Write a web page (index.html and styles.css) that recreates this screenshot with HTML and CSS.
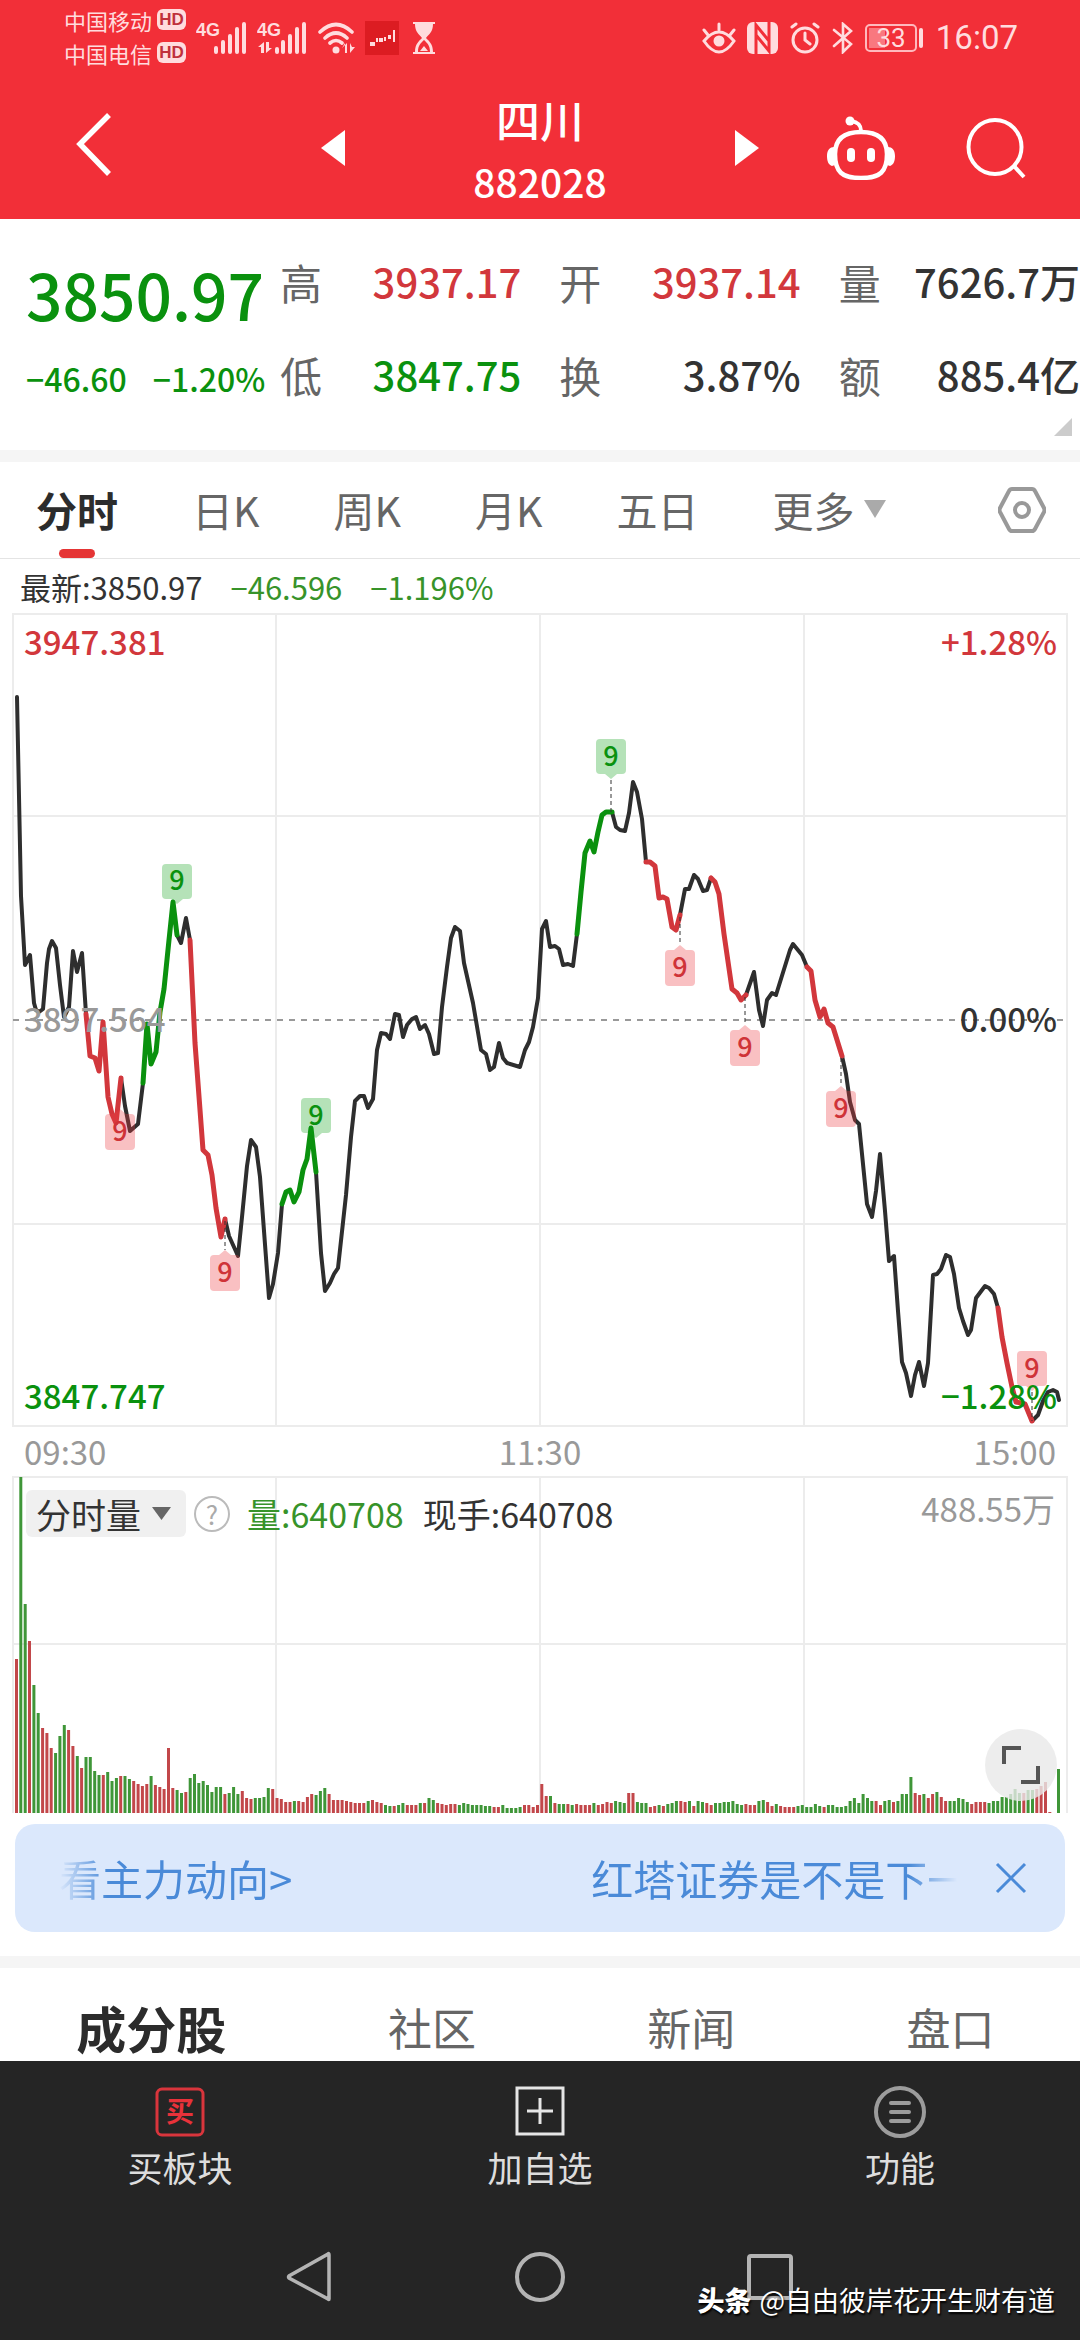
FILE: index.html
```html
<!DOCTYPE html>
<html lang="zh-CN">
<head>
<meta charset="utf-8">
<meta name="viewport" content="width=device-width, initial-scale=1">
<title>四川 882028</title>
<link rel="stylesheet" href="styles.css">
</head>
<body>
<div class="app">
  <header class="top">
    <div class="status">
      <div class="carriers">
        <span class="carrier">中国移动<b class="hd">HD</b></span>
        <span class="carrier">中国电信<b class="hd">HD</b></span>
      </div>
      <div class="status-left">
        <svg class="ic" width="52" height="32" viewBox="0 0 52 32"><text class="net" x="0" y="14">4G</text><path class="sig" d="M20 26v4M27 20v10M34 14v16M41 7v23M48 2v28"/></svg>
        <svg class="ic" width="52" height="32" viewBox="0 0 52 32"><text class="net" x="0" y="14">4G</text><path class="fill" d="M4 20v11H7V20L1 25h3zM9 20v11l6-5h-3V20z"/><path class="sig" d="M20 27v3M26 20v10M33 14v16M40 7v23M47 2v28"/></svg>
        <svg class="ic" width="38" height="32" viewBox="0 0 38 32"><g fill="none" stroke="#ffdcde" stroke-width="3.6" stroke-linecap="round"><path d="M2 10Q18-5 34 10M7 16Q18 6 29 16M12 21q6-5 12 0"/></g><circle class="fill" cx="18" cy="28" r="3.5"/><path class="fill" d="M27 21v10h2V21l-5 5zM32 21v10l5-6h-3z"/></svg>
        <svg class="ic" width="34" height="34" viewBox="0 0 34 34"><rect width="34" height="34" fill="#dc1c22"/><path d="M5 21h3v4H5zM14 17h4v4h-4zM23 14h3v4h-3z" fill="#ffdcde"/><path d="M9 21v4M12 17v4M20 16v4M29 9v12" stroke="#ffdcde" stroke-width="2"/></svg>
        <svg class="ic hourglass" width="24" height="32" viewBox="0 0 24 32"><path class="fill" d="M1 0h22v2H1zM1 30h22v2H1zM3 2h18c0 8-4 10-7 14 3 3 7 6 7 14h-3c0-7-3-9-6-12-3 3-6 5-6 12H3c0-8 4-11 7-14-3-4-7-6-7-14zM8 29l4-5 4 5z"/></svg>
      </div>
      <div class="status-right">
        <svg class="ic" width="34" height="32" viewBox="0 0 34 32"><g fill="none" stroke="#ffdcde" stroke-width="3" stroke-linecap="round"><path d="M2 19Q17 1 32 19Q17 41 2 19zM17 2v6M2 8l4 5M32 8l-4 5"/></g><circle class="fill" cx="17" cy="19" r="5.5"/></svg>
        <svg class="ic" width="32" height="32" viewBox="0 0 32 32"><rect class="fill" width="31" height="32" rx="6"/><path d="M9 32V3L22 19V11M22 0v29L9 13v8" fill="none" stroke="#f22f38" stroke-width="3"/></svg>
        <svg class="ic" width="31" height="32" viewBox="0 0 31 32"><g fill="none" stroke="#ffdcde" stroke-width="3" stroke-linecap="round"><circle cx="15" cy="18" r="12"/><path d="M15 11v7l5 4M2 5l4-3M28 5l-4-3"/></g></svg>
        <svg class="ic" width="22" height="32" viewBox="0 0 22 32"><path d="M2 8l17 14-8 8V2l8 7L2 24" fill="none" stroke="#ffdcde" stroke-width="2.6" stroke-linecap="round"/></svg>
        <svg class="ic battery" width="60" height="28" viewBox="0 0 60 28"><rect x="1" y="1" width="50" height="26" rx="4" fill="none" stroke="#ffb9bd" stroke-width="2"/><rect x="4" y="4" width="16" height="20" fill="#f9787f"/><path d="M56 6v16" stroke="#ffdcde" stroke-width="4" stroke-linecap="round"/><text class="pct" x="26" y="23">33</text></svg>
        <span class="clock">16:07</span>
      </div>
    </div>
    <nav class="titlebar">
      <button class="bare back" aria-label="返回"><svg width="38" height="66" viewBox="0 0 38 66"><path d="M34 3L5 32l29 30" fill="none" stroke="#fff" stroke-width="5.5"/></svg></button>
      <div class="switcher">
        <button class="bare" aria-label="上一个"><svg width="24" height="36" viewBox="0 0 24 36"><path d="M24 0v36L0 18z" fill="#fff"/></svg></button>
        <h1 class="name">四川<span class="code">882028</span></h1>
        <button class="bare" aria-label="下一个"><svg width="24" height="36" viewBox="0 0 24 36"><path d="M0 0v36l24-18z" fill="#fff"/></svg></button>
      </div>
      <div class="tools">
        <button class="bare" aria-label="助手"><svg width="70" height="64" viewBox="0 0 70 64"><path d="M35 16c14 0 26 5 26 22 0 18-7 24-26 24S9 56 9 38c0-17 12-22 26-22z" fill="none" stroke="#fff" stroke-width="4.5"/><path d="M8 31c-4 0-7 3-7 9s2 9 5 10l3-1zM62 31c4 0 7 3 7 9s-2 9-5 10l-3-1z" fill="#fff"/><path d="M35 15c0-7-4-9-10-10" fill="none" stroke="#fff" stroke-width="4"/><circle cx="24" cy="5" r="4.5" fill="#fff"/><rect x="21" y="32" width="8" height="14" rx="4" fill="#fff"/><rect x="41" y="32" width="8" height="14" rx="4" fill="#fff"/></svg></button>
        <button class="bare" aria-label="搜索"><svg width="60" height="62" viewBox="0 0 60 62"><g fill="none" stroke="#fff" stroke-width="4"><ellipse cx="29" cy="30" rx="26.5" ry="27"/><path d="M47 48l11 12"/></g></svg></button>
      </div>
    </nav>
  </header>

  <section class="quote">
    <div class="last">
      <strong class="price">3850.97</strong>
      <div class="change"><span>−46.60</span><span>−1.20%</span></div>
    </div>
    <dl class="stats">
      <div class="stat"><dt>高</dt><dd class="up">3937.17</dd></div>
      <div class="stat"><dt>开</dt><dd class="up">3937.14</dd></div>
      <div class="stat"><dt>量</dt><dd>7626.7万</dd></div>
      <div class="stat"><dt>低</dt><dd class="down">3847.75</dd></div>
      <div class="stat"><dt>换</dt><dd>3.87%</dd></div>
      <div class="stat"><dt>额</dt><dd>885.4亿</dd></div>
    </dl>
    <svg class="corner" width="18" height="18" viewBox="0 0 18 18"><path d="M18 0v18H0z" fill="#ccc"/></svg>
  </section>

  <nav class="periods">
    <button class="bare period active">分时</button>
    <button class="bare period">日K</button>
    <button class="bare period">周K</button>
    <button class="bare period">月K</button>
    <button class="bare period">五日</button>
    <button class="bare period more">更多<svg width="22" height="18" viewBox="0 0 22 18"><path d="M0 0h22L11 18z" fill="#aaa"/></svg></button>
    <button class="bare gear" aria-label="设置"><svg width="48" height="48" viewBox="0 0 48 48"><g fill="none" stroke="#999" stroke-width="4" stroke-linejoin="round"><path d="M14 3h20q2 0 3 2l9 17q1 2 0 4l-9 17q-1 2-3 2H14q-2 0-3-2L2 26q-1-2 0-4l9-17q1-2 3-2z"/><circle cx="24" cy="24" r="7"/></g></svg></button>
  </nav>

  <p class="info"><span>最新:3850.97</span><span class="green">−46.596</span><span class="green">−1.196%</span></p>

  <section class="chart">
    <svg class="plot" viewBox="12 612 1056 816">
      <path class="grid" d="M13 614H1067V1426H13zM276 614V1426M540 614V1426M804 614V1426M13 816H1067M13 1224H1067"/>
      <path class="mid" d="M13 1020H1067"/>
      <g class="line">
        <path d="M17 697L21 896 25 965 30 955 34 1003 36 1010 39 1012 43 1009 47 963 49 949 52 941 56 948 60 985 64 1017 69 1007 73 951 77 972 82 953 86 1014M121 1078L125 1106 130 1131 138 1124 143 1083M177 935L181 943 186 918 190 940M225 1219L229 1236 238 1256 242 1217 247 1166 251 1140 256 1147 260 1177 264 1231 269 1298 273 1284 278 1253 282 1204M316 1172L321 1253 325 1291 330 1283 334 1274 338 1268 346 1195 351 1137 355 1101 360 1096 364 1096 368 1108 373 1099 377 1050 381 1033 386 1034 390 1039 395 1014 399 1015 403 1037 407 1025 412 1019 416 1017 420 1029 425 1025 429 1034 434 1054 438 1053 442 1007 447 967 451 938 455 927 460 931 464 963 473 1003 481 1050 486 1054 490 1070 494 1067 499 1043 503 1058 507 1063 520 1067 525 1050 529 1042 533 1027 538 998 542 929 546 921 550 947 555 946 559 949 563 965 568 964 573 966 577 934M612 812L616 827 620 830 625 831 629 813 633 782 637 792 642 819 646 862M680 915L685 889 689 889 694 875 698 879 703 891 707 890 711 878M746 995L754 972 759 1010 763 1026 767 1000 772 993 776 995 790 950 793 944 802 955 807 967M842 1056L846 1074 850 1102 855 1120 859 1124 863 1164 867 1204 872 1217 876 1191 880 1154 885 1211 889 1261 894 1256 898 1311 902 1362 906 1373 911 1396 915 1375 919 1362 924 1386 928 1363 933 1275 937 1274 941 1269 946 1255 950 1257 954 1274 959 1308 963 1321 968 1335 971 1330 976 1298 985 1286 989 1288 994 1294 998 1308M1032 1421L1038 1415 1043 1401 1048 1392 1053 1390 1057 1392 1059 1400"/>
        <path class="sell" d="M86 1014L90 1056 95 1058 99 1071 103 1022 108 1097 112 1114 116 1123 121 1078M190 940L195 1043 203 1150 208 1155 212 1175 216 1208 221 1237 225 1219M646 862L650 862 655 866 659 898 663 897 667 899 672 927 676 930 680 915M711 878L715 882 719 894 724 934 732 989 737 993 741 1000 746 995M807 967L811 971 815 1000 820 1017 824 1009 828 1023 833 1027 842 1056M998 1308L1002 1337 1007 1363 1012 1387 1016 1402 1025 1404 1032 1421"/>
        <path class="buy" d="M143 1083L147 1024 151 1064 156 1052 160 1012 164 989 169 940 173 902 177 935M282 1204L286 1192 290 1190 294 1202 299 1192 303 1170 307 1159 311 1128 316 1172M577 934L581 892 585 853 590 841 594 852 598 832 602 815 606 812 612 812"/>
      </g>
      <path class="leader" d="M225 1221V1250M611 780V812M680 917V945M745 997V1025M841 1058V1085M1032 1392V1421"/>
      <defs>
        <path id="tag-up" d="M-11 0H11Q15 0 15 4V31Q15 35 11 35H6L0 40-6 35H-11Q-15 35-15 31V4Q-15 0-11 0z"/>
        <path id="tag-down" d="M-11 5H-6L0 0 6 5H11Q15 5 15 9V37Q15 41 11 41H-11Q-15 41-15 37V9Q-15 5-11 5z"/>
      </defs>
      <g class="tag tag-green">
        <use href="#tag-up" x="177" y="864"/><text x="177" y="890">9</text>
        <use href="#tag-up" x="316" y="1098"/><text x="316" y="1125">9</text>
        <use href="#tag-up" x="611" y="739"/><text x="611" y="766">9</text>
      </g>
      <g class="tag tag-red">
        <use href="#tag-down" x="120" y="1109"/><text x="120" y="1141">9</text>
        <use href="#tag-down" x="225" y="1250"/><text x="225" y="1282">9</text>
        <use href="#tag-down" x="680" y="945"/><text x="680" y="977">9</text>
        <use href="#tag-down" x="745" y="1025"/><text x="745" y="1057">9</text>
        <use href="#tag-down" x="841" y="1086"/><text x="841" y="1118">9</text>
        <use href="#tag-up" x="1032" y="1351"/><text x="1032" y="1378">9</text>
      </g>
    </svg>
    <div class="scale scale-left"><span class="up">3947.381</span><span class="gray">3897.564</span><span class="down">3847.747</span></div>
    <div class="scale scale-right"><span class="up">+1.28%</span><span>0.00%</span><span class="down">−1.28%</span></div>
  </section>
  <div class="axis"><span>09:30</span><span>11:30</span><span>15:00</span></div>

  <section class="volume">
    <svg class="plot" viewBox="0 0 1056 338">
      <path class="grid" d="M1 338V2H1055V338M264 2V338M528 2V338M792 2V338M1 169H1055"/>
      <path id="vol-up" class="vol-up"/>
      <path id="vol-down" class="vol-down"/>
    </svg>
    <div class="vol-head">
      <button class="bare indicator">分时量<svg width="19" height="13" viewBox="0 0 19 13"><path d="M0 0h19L9.5 13z" fill="#666"/></svg></button>
      <button class="bare help" aria-label="说明">?</button>
      <span class="green">量:640708</span>
      <span class="hand">现手:640708</span>
      <span class="vol-max">488.55万</span>
    </div>
    <button class="bare expand" aria-label="全屏"><svg width="38" height="38" viewBox="0 0 38 38"><path d="M2 18V2h17M36 20v16H19" fill="none" stroke="#555" stroke-width="4"/></svg></button>
  </section>

  <aside class="notice">
    <div class="marquee"><a href="#">看主力动向&gt;</a><a href="#">红塔证券是不是下一</a></div>
    <button class="bare" aria-label="关闭"><svg width="32" height="32" viewBox="0 0 32 32"><path d="M2 2l28 28M30 2L2 30" fill="none" stroke="#4a8ad8" stroke-width="3"/></svg></button>
  </aside>

  <nav class="sections">
    <button class="bare section active">成分股</button>
    <button class="bare section">社区</button>
    <button class="bare section">新闻</button>
    <button class="bare section">盘口</button>
  </nav>

  <footer class="bottom">
    <div class="actions">
      <button class="bare action"><svg width="50" height="52" viewBox="0 0 50 52"><rect x="2" y="3" width="46" height="46" rx="5" fill="none" stroke="#d9353c" stroke-width="3"/><text class="buy-glyph" x="25" y="36">买</text></svg>买板块</button>
      <button class="bare action"><svg width="50" height="52" viewBox="0 0 50 52"><path d="M2 2h46v46H2zM25 12v26M12 25h26" fill="none" stroke="#e6e6e6" stroke-width="3"/></svg>加自选</button>
      <button class="bare action"><svg width="52" height="52" viewBox="0 0 52 52"><circle cx="26" cy="26" r="24" fill="none" stroke="#9c9c9c" stroke-width="4"/><path d="M17 17h18M17 26h18M17 35h18" stroke="#9c9c9c" stroke-width="4" stroke-linecap="round"/></svg>功能</button>
    </div>
    <div class="system">
      <button class="bare" aria-label="后退"><svg width="50" height="52" viewBox="0 0 50 52"><path d="M44 4v44q0 1-1 0L4 27q-1-1 0-2L43 3q1-1 1 1z" fill="none" stroke="#b4b4b4" stroke-width="3.5"/></svg></button>
      <button class="bare" aria-label="主屏幕"><svg width="50" height="52" viewBox="0 0 50 52"><circle cx="25" cy="26" r="23" fill="none" stroke="#b4b4b4" stroke-width="4"/></svg></button>
      <button class="bare" aria-label="最近任务"><svg width="50" height="52" viewBox="0 0 50 52"><rect x="4" y="5" width="42" height="42" rx="2" fill="none" stroke="#b4b4b4" stroke-width="4"/></svg></button>
    </div>
    <p class="credit"><b>头条</b>@自由彼岸花开生财有道</p>
  </footer>
</div>
<script src="volume.js"></script>
</body>
</html>
```
FILE: volume.js
```js
// One entry per minute: r = rising, g = falling, followed by the bar height.
const minutes = `r154 g336 g209 r172 g128 g100 r85 r80 r65 g60 g77 g88 r83 r67 g57 r45 g56 g56 g42 g38
r38 g41 g32 g35 r37 g37 g34 r32 r29 r27 r29 g37 r28 r26 r24 r65 r25 g23 g20 r21
g35 g39 g30 g32 g28 g21 g26 g26 r19 g20 g26 g19 r22 r15 r14 g15 g15 g16 g25 r24
r15 r14 r11 r11 g12 r12 r11 r16 r19 g18 g22 g25 r19 r13 r13 r13 r12 r11 r10 r10
r10 g12 r13 r11 r10 g8 g7 r7 g8 g10 r8 r8 r8 g10 r10 g15 g13 r10 r9 r8
r9 r9 g8 g10 g9 g8 g8 g8 g7 g7 r6 r6 g8 g5 g5 g5 g6 r8 r8 r6
r8 r29 r17 g17 r10 g9 g9 r9 g8 r9 r8 r8 r8 g10 r8 r9 r11 r10 g12 g11
g10 r20 r20 g11 g10 g10 r6 r7 g8 r7 g9 g10 g12 r12 r11 g12 r7 g12 g11 r10
r8 g10 g10 g11 g11 g12 g9 g8 r9 r8 r8 g12 g13 r11 r7 g9 r7 r6 r6 r6
g7 g8 g6 g6 g9 g7 r6 g8 g8 g6 g6 g7 g12 g15 g10 g19 g15 g12 r12 r8
g12 g13 r11 g12 g19 g19 g36 r20 r18 g19 r15 r19 g21 r16 r12 g12 g12 g15 g14 g11
r9 r11 r11 r11 g10 g12 g12 g16 g16 g19 g24 g20 r20 g23 g23 r24 r27 r31 r1 r0 g44`.split(/\s+/);

const step = 1042 / (minutes.length - 1);
const paths = { r: "", g: "" };
minutes.forEach((m, i) => {
  const x = (3 + i * step).toFixed(1);
  const h = Number(m.slice(1));
  paths[m[0]] += `M${x} 338v${-h}h3v${h}z`;
});
document.getElementById("vol-up").setAttribute("d", paths.r);
document.getElementById("vol-down").setAttribute("d", paths.g);
```
FILE: styles.css
```css
* { box-sizing: border-box; }

body {
  margin: 0;
  background: #fff;
  color: #333;
  font-family: "Noto Sans CJK SC", "Noto Sans", sans-serif;
}

h1, p, dl, dd { margin: 0; }
svg { display: block; flex: none; }

.app {
  min-height: 100vh;
  display: flex;
  flex-direction: column;
}

.bare {
  margin: 0;
  padding: 0;
  border: 0;
  background: none;
  color: inherit;
  font: inherit;
  cursor: pointer;
}

.up { color: #d2373c; }
.down { color: #0a910e; }
.green { color: #37932a; }
.gray { color: #999; }

/* header */
.top {
  background: #f22f38;
  color: #fff;
}
.status {
  display: flex;
  align-items: center;
  height: 76px;
  padding: 0 62px 0 64px;
  color: #ffdcde;
}
.carriers {
  display: flex;
  flex-direction: column;
  gap: 1px;
  padding-bottom: 4px;
}
.carrier {
  display: flex;
  align-items: center;
  gap: 5px;
  font-size: 22px;
  line-height: 32px;
}
.hd {
  width: 29px;
  border-radius: 6px;
  background: #ffdcde;
  color: #c0303c;
  font: bold 17px/21px "Liberation Sans", sans-serif;
  text-align: center;
}
.status-left {
  display: flex;
  align-items: center;
  gap: 9px;
  margin-left: 10px;
}
.hourglass { margin-left: 4px; }
.status-right {
  display: flex;
  align-items: center;
  gap: 11px;
  margin-left: auto;
}
.fill { fill: #ffdcde; }
.sig { fill: none; stroke: #ffdcde; stroke-width: 4; stroke-linecap: round; }
.net { fill: #ffdcde; font: bold 18px "Liberation Sans Narrow", "Liberation Sans", sans-serif; }
.pct { fill: #ffdcde; font: 26px Roboto, sans-serif; text-anchor: middle; }
.clock { font: 33px/40px Roboto, sans-serif; }

.titlebar {
  display: grid;
  grid-template-columns: 1fr auto 1fr;
  align-items: center;
  height: 143px;
}
.back { justify-self: start; margin-left: 75px; padding-bottom: 6px; }
.switcher {
  display: flex;
  align-items: center;
  justify-content: space-between;
  width: 438px;
}
.name {
  display: flex;
  flex-direction: column;
  align-items: center;
  padding-top: 4px;
  font-size: 44px;
  font-weight: 500;
  line-height: 62px;
}
.code { font-size: 39px; }
.tools {
  display: flex;
  align-items: center;
  justify-content: flex-end;
  gap: 70px;
  padding-right: 54px;
}

/* quote */
.quote {
  position: relative;
  display: flex;
  height: 231px;
  padding: 22px 0 0 26px;
}
.last {
  width: 254px;
  color: #0a910e;
  white-space: nowrap;
}
.price {
  display: block;
  font-size: 64px;
  font-weight: 500;
  line-height: 104px;
}
.change {
  display: flex;
  gap: 26px;
  font-size: 32px;
  font-weight: 500;
  line-height: 66px;
}
.stats {
  flex: 1;
  display: grid;
  grid-template-columns: repeat(3, 1fr);
  grid-auto-rows: 80px;
  gap: 13px 38px;
}
.stat {
  display: flex;
  align-items: center;
  justify-content: space-between;
  white-space: nowrap;
}
.stat dt { color: #666; font-size: 42px; }
.stat dd { font-size: 40px; font-weight: 500; }
.corner { position: absolute; right: 8px; bottom: 14px; }

/* period tabs */
.periods {
  display: flex;
  gap: 74px;
  height: 109px;
  padding: 0 36px;
  border-top: 12px solid #f5f5f5;
  border-bottom: 1px solid #e4e4e4;
}
.period {
  position: relative;
  display: flex;
  align-items: center;
  gap: 9px;
  padding-bottom: 2px;
  color: #666;
  font-size: 41px;
}
.period.active { color: #2c2c2c; font-weight: 700; }
.period.active::after {
  content: "";
  position: absolute;
  left: 50%;
  bottom: 0;
  width: 36px;
  height: 9px;
  margin-left: -18px;
  border-radius: 5px;
  background: #e53535;
}
.gear { margin-left: auto; margin-right: -2px; }

.info {
  display: flex;
  gap: 28px;
  padding: 2px 20px 0;
  font-size: 31px;
  line-height: 51px;
}

/* charts */
.chart, .volume {
  position: relative;
  margin: 0 12px;
}
.plot { width: 100%; height: auto; }
.grid { fill: none; stroke: #ececec; stroke-width: 2; }
.mid { stroke: #999; stroke-width: 2; stroke-dasharray: 6 6; }
.line path {
  fill: none;
  stroke: #2e2e2e;
  stroke-width: 4;
  stroke-linejoin: round;
  stroke-linecap: round;
}
.line .sell { stroke: #d2373c; stroke-width: 5; }
.line .buy { stroke: #0a910e; stroke-width: 5; }
.leader { stroke: #333; stroke-width: 1; stroke-dasharray: 4 3; }
.tag text {
  font-size: 27px;
  font-weight: 500;
  text-anchor: middle;
}
.tag-green use { fill: rgba(10, 160, 20, 0.3); }
.tag-green text { fill: #0a910e; }
.tag-red use { fill: rgba(235, 60, 65, 0.32); }
.tag-red text { fill: #cf3338; }

.scale {
  position: absolute;
  top: 5px;
  bottom: 9px;
  display: flex;
  flex-direction: column;
  justify-content: space-between;
  font-size: 33px;
  font-weight: 500;
  line-height: 48px;
}
.scale-left { left: 12px; }
.scale-right { right: 11px; text-align: right; }

.axis {
  display: grid;
  grid-template-columns: repeat(3, 1fr);
  padding: 0 24px;
  color: #999;
  font-size: 33px;
  line-height: 47px;
}
.axis span:nth-child(2) { text-align: center; }
.axis span:nth-child(3) { text-align: right; }

.vol-up { fill: #c2474a; }
.vol-down { fill: #3f9638; }
.vol-head {
  position: absolute;
  top: 10px;
  left: 14px;
  right: 13px;
  display: flex;
  align-items: center;
  font-size: 34px;
  line-height: 47px;
}
.indicator {
  display: flex;
  align-items: center;
  gap: 11px;
  margin-right: 8px;
  padding: 0 15px 0 10px;
  border-radius: 6px;
  background: rgba(238, 238, 238, 0.9);
  font-size: 35px;
}
.help {
  width: 36px;
  height: 36px;
  margin-right: 17px;
  border: 2px solid #bbb;
  border-radius: 50%;
  color: #aaa;
  font-size: 26px;
  line-height: 30px;
}
.hand { margin-left: 19px; }
.vol-max {
  margin-left: auto;
  padding-bottom: 10px;
  color: #999;
  font-size: 33px;
}
.expand {
  position: absolute;
  right: 11px;
  bottom: 12px;
  display: flex;
  align-items: center;
  justify-content: center;
  width: 72px;
  height: 72px;
  border-radius: 50%;
  background: rgba(232, 232, 232, 0.8);
}

/* notice */
.notice {
  display: flex;
  align-items: center;
  justify-content: space-between;
  height: 108px;
  margin: 11px 15px 24px;
  padding: 0 38px 0 44px;
  border-radius: 20px;
  background: #dbe8fc;
  color: #4a8ad8;
}
.marquee {
  flex: 1;
  display: flex;
  gap: 299px;
  overflow: hidden;
  margin-right: 38px;
  font-size: 42px;
  line-height: 64px;
  white-space: nowrap;
  -webkit-mask-image: linear-gradient(90deg, transparent, #000 48px, #000 calc(100% - 48px), transparent);
  mask-image: linear-gradient(90deg, transparent, #000 48px, #000 calc(100% - 48px), transparent);
}
.marquee a { color: inherit; text-decoration: none; }

/* section tabs */
.sections {
  display: grid;
  grid-template-columns: 7fr 6fr 6fr 6fr;
  height: 105px;
  padding-top: 25px;
  border-top: 12px solid #f5f5f5;
}
.section { color: #666; font-size: 44px; line-height: 64px; }
.section.active { color: #2c2c2c; font-size: 50px; font-weight: 700; }

/* bottom bars */
.bottom {
  position: relative;
  flex: 1;
  min-height: 279px;
  padding-top: 25px;
  background: #252525;
  color: #ddd;
}
.actions {
  display: grid;
  grid-template-columns: repeat(3, 1fr);
}
.action {
  display: flex;
  flex-direction: column;
  align-items: center;
  gap: 3px;
  font-size: 35px;
  line-height: 52px;
}
.buy-glyph { fill: #e8323a; font-size: 28px; font-weight: 700; text-anchor: middle; }
.system {
  display: flex;
  justify-content: center;
  gap: 180px;
  padding-top: 58px;
}
.credit {
  position: absolute;
  right: 25px;
  bottom: 20px;
  display: flex;
  gap: 8px;
  color: #fff;
  font-size: 27px;
  line-height: 40px;
  text-shadow: 1px 2px 2px #000;
}
.credit b { font-weight: 900; }
```
